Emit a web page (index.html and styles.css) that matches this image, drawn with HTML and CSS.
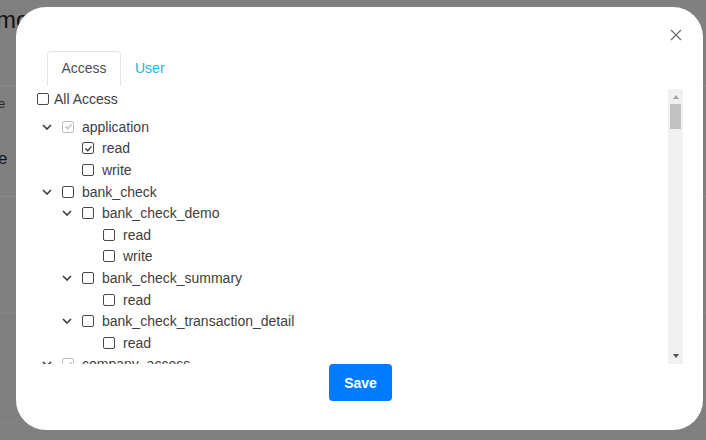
FILE: index.html
```html
<!DOCTYPE html>
<html>
<head>
<meta charset="utf-8">
<link rel="stylesheet" href="styles.css">
</head>
<body>
<div class="page">
  <div class="page-title">mo</div>
  <div class="page-rule r1"></div>
  <div class="page-small">e</div>
  <div class="page-big">e</div>
  <div class="page-rule r2"></div>
  <div class="page-rule r3"></div>
  <div class="page-rule r4"></div>
</div>

<div class="modal">
  <button class="close" aria-label="Close">
    <svg width="12" height="12" viewBox="0 0 12 12"><path d="M1 1L11 11M11 1L1 11" stroke="#6b6b6b" stroke-width="1.2" fill="none"/></svg>
  </button>
  <div class="tabs">
    <div class="tab active">Access</div>
    <div class="tab link">User</div>
  </div>
  <div class="scroll">
    <div class="tree">
      <div class="row all"><span class="cb"></span><span class="label">All Access</span></div>

      <div class="row l1"><span class="chev"><svg width="10" height="6" viewBox="0 0 10 6"><path d="M1 1L5 5L9 1" stroke="#3a3a3a" stroke-width="1.6" fill="none"/></svg></span><span class="cb dis"><svg width="9" height="9" viewBox="0 0 9 9"><path d="M1.5 4.5L3.7 6.7L7.5 2.3" stroke="#b0b0b0" stroke-width="1.1" fill="none"/></svg></span><span class="label">application</span></div>
      <div class="row l2"><span class="chev"></span><span class="cb"><svg width="9" height="9" viewBox="0 0 9 9"><path d="M1.5 4.5L3.7 6.7L7.5 2.3" stroke="#333" stroke-width="1.3" fill="none"/></svg></span><span class="label">read</span></div>
      <div class="row l2"><span class="chev"></span><span class="cb"></span><span class="label">write</span></div>

      <div class="row l1"><span class="chev"><svg width="10" height="6" viewBox="0 0 10 6"><path d="M1 1L5 5L9 1" stroke="#3a3a3a" stroke-width="1.6" fill="none"/></svg></span><span class="cb"></span><span class="label">bank_check</span></div>
      <div class="row l2"><span class="chev"><svg width="10" height="6" viewBox="0 0 10 6"><path d="M1 1L5 5L9 1" stroke="#3a3a3a" stroke-width="1.6" fill="none"/></svg></span><span class="cb"></span><span class="label">bank_check_demo</span></div>
      <div class="row l3"><span class="chev"></span><span class="cb"></span><span class="label">read</span></div>
      <div class="row l3"><span class="chev"></span><span class="cb"></span><span class="label">write</span></div>
      <div class="row l2"><span class="chev"><svg width="10" height="6" viewBox="0 0 10 6"><path d="M1 1L5 5L9 1" stroke="#3a3a3a" stroke-width="1.6" fill="none"/></svg></span><span class="cb"></span><span class="label">bank_check_summary</span></div>
      <div class="row l3"><span class="chev"></span><span class="cb"></span><span class="label">read</span></div>
      <div class="row l2"><span class="chev"><svg width="10" height="6" viewBox="0 0 10 6"><path d="M1 1L5 5L9 1" stroke="#3a3a3a" stroke-width="1.6" fill="none"/></svg></span><span class="cb"></span><span class="label">bank_check_transaction_detail</span></div>
      <div class="row l3"><span class="chev"></span><span class="cb"></span><span class="label">read</span></div>

      <div class="row l1"><span class="chev"><svg width="10" height="6" viewBox="0 0 10 6"><path d="M1 1L5 5L9 1" stroke="#3a3a3a" stroke-width="1.6" fill="none"/></svg></span><span class="cb dis"><svg width="9" height="9" viewBox="0 0 9 9"><path d="M1.5 4.5L3.7 6.7L7.5 2.3" stroke="#b0b0b0" stroke-width="1.1" fill="none"/></svg></span><span class="label">company_access</span></div>
      <div class="row l2"><span class="chev"></span><span class="cb"></span><span class="label">read</span></div>
    </div>
    <div class="scrollbar">
      <span class="arrow up"></span>
      <span class="thumb"></span>
      <span class="track-fill"></span>
      <span class="arrow down"></span>
    </div>
  </div>
  <div class="footer">
    <button class="save">Save</button>
  </div>
</div>
</body>
</html>
```

FILE: styles.css
```css
html, body {
  margin: 0;
  padding: 0;
}
body {
  width: 706px;
  height: 440px;
  overflow: hidden;
  background: #808080;
  font-family: "Liberation Sans", Arial, sans-serif;
}

/* backdrop page (under the dim overlay) */
.page {
  height: 440px;
  display: flex;
  flex-direction: column;
}
.page-title {
  font-size: 24px;
  color: #141414;
  margin: 6px 0 0 -4px;
  height: 34px;
  line-height: 28px;
}
.page-rule {
  height: 1px;
  background: #898989;
}
.r1 { margin-top: 45px; }
.page-small {
  font-size: 13px;
  color: #262626;
  margin: 10px 0 0 -2px;
  height: 16px;
}
.page-big {
  font-size: 17px;
  color: #161616;
  margin: 37px 0 0 -2px;
  height: 20px;
}
.r2 { margin-top: 27px; }
.r3 { margin-top: 115px; background: #858585; }
.r4 { margin-top: 104px; background: #7a7a7a; }

/* modal */
.modal {
  position: fixed;
  left: 16px;
  top: 7px;
  width: 687px;
  height: 423px;
  box-sizing: border-box;
  background: #fff;
  border-radius: 30px;
  padding: 44px 20px 28px 21px;
  display: flex;
  flex-direction: column;
}
.close {
  position: absolute;
  right: 21px;
  top: 22px;
  border: 0;
  background: none;
  padding: 0;
  width: 12px;
  height: 12px;
  display: flex;
}

.tabs {
  display: flex;
  margin-left: 10px;
  height: 35px;
  flex: none;
}
.tab {
  font-size: 14px;
  padding: 0 14px;
  display: flex;
  align-items: center;
  box-sizing: border-box;
  height: 34px;
}
.tab.active {
  color: #495057;
  border: 1px solid #e3e6e9;
  border-bottom: 0;
  border-radius: 4px 4px 0 0;
  width: 74px;
  height: 35px;
  padding: 0 13px 2px;
  justify-content: center;
}
.tab.link {
  color: #1cb6e8;
  padding-left: 14px;
}

.scroll {
  margin-top: 3px;
  height: 275px;
  flex: none;
  display: flex;
}
.tree {
  flex: 1;
  overflow: hidden;
  padding-top: 3px;
}
.row {
  display: flex;
  align-items: center;
  height: 21.6px;
  font-size: 14px;
  color: #404040;
}
.row.all {
  height: 13px;
  margin-bottom: 11px;
}
.row.all .label { margin-left: 5px; }
.l1 { padding-left: 0; }
.l2 { padding-left: 20px; }
.l3 { padding-left: 41px; }
.chev {
  width: 20px;
  height: 10px;
  display: flex;
  align-items: center;
  justify-content: center;
  margin-right: 5px;
  flex: none;
}
.cb {
  width: 12px;
  height: 12px;
  box-sizing: border-box;
  border: 1.5px solid #4a4a4a;
  border-radius: 2px;
  display: flex;
  align-items: center;
  justify-content: center;
  flex: none;
  background: #fff;
}
.cb svg { flex: none; }
.cb.dis {
  border-color: #bdbdbd;
  border-width: 1px;
}
.label {
  margin-left: 8px;
  white-space: nowrap;
}

.scrollbar {
  width: 15px;
  background: #f1f1f1;
  display: flex;
  flex-direction: column;
  align-items: center;
  flex: none;
}
.arrow {
  width: 0;
  height: 0;
  border-left: 3.5px solid transparent;
  border-right: 3.5px solid transparent;
  flex: none;
}
.arrow.up {
  margin-top: 6px;
  border-bottom: 4px solid #a3a3a3;
}
.thumb {
  width: 11px;
  height: 25px;
  background: #c1c1c1;
  margin-top: 5px;
  flex: none;
}
.track-fill { flex: 1; }
.arrow.down {
  margin-bottom: 6px;
  border-top: 4px solid #505050;
}

.footer {
  display: flex;
  justify-content: center;
  margin-left: 1px;
}
.save {
  width: 63px;
  height: 37px;
  border: 0;
  border-radius: 4px;
  background: #007bff;
  color: #fff;
  font-family: "Liberation Sans", Arial, sans-serif;
  font-weight: bold;
  font-size: 14px;
  padding: 0;
}
```
